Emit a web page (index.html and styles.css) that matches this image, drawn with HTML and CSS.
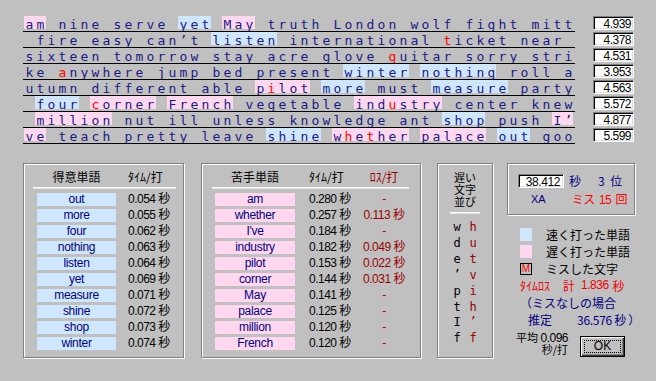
FILE: index.html
```html
<!DOCTYPE html>
<html lang="ja">
<head>
<meta charset="utf-8">
<title>結果</title>
<link rel="stylesheet" href="styles.css">
</head>
<body>
<div class="top">
  <div class="row"><div class="line"><span class="hl p">am</span> nine serve <span class="hl b">yet</span> <span class="hl p">May</span> truth London wolf fight mitt</div><div class="num">4.939</div></div>
  <div class="row"><div class="line"> fire easy can’t <span class="hl b">listen</span> international <span class="m">t</span>icket near </div><div class="num">4.378</div></div>
  <div class="row"><div class="line">sixteen tomorrow stay acre glove <span class="m">g</span>uitar sorry stri</div><div class="num">4.531</div></div>
  <div class="row"><div class="line">ke <span class="m">a</span>nywhere jump bed present <span class="hl b">winter</span> <span class="hl b">nothing</span> roll a</div><div class="num">3.953</div></div>
  <div class="row"><div class="line">utumn different able <span class="hl p">p<span class="m">i</span>lot</span> <span class="hl b">more</span> must <span class="hl b">measure</span> party</div><div class="num">4.563</div></div>
  <div class="row"><div class="line"> <span class="hl b">four</span> <span class="hl p"><span class="m">c</span>orner</span> <span class="hl p">French</span> vegetable <span class="hl p">ind<span class="m">u</span>stry</span> center knew</div><div class="num">5.572</div></div>
  <div class="row"><div class="line"> <span class="hl p">million</span> nut ill unless knowledge ant <span class="hl b">shop</span> push <span class="hl p">I’</span></div><div class="num">4.877</div></div>
  <div class="row"><div class="line"><span class="hl p">ve</span> teach pretty leave <span class="hl b">shine</span> <span class="hl p">w<span class="m">h</span>e<span class="m">t</span>her</span> <span class="hl p">palace</span> <span class="hl b">out</span> goo</div><div class="num">5.599</div></div>
</div>

<div class="bottom">
  <div class="panel good">
    <div class="head"><span class="w">得意単語</span><span class="t">ﾀｲﾑ/打</span></div>
    <div class="sep"></div>
    <div class="list">
      <div class="item"><span class="w">out</span><span class="t">0.054 秒</span></div>
      <div class="item"><span class="w">more</span><span class="t">0.055 秒</span></div>
      <div class="item"><span class="w">four</span><span class="t">0.062 秒</span></div>
      <div class="item"><span class="w">nothing</span><span class="t">0.063 秒</span></div>
      <div class="item"><span class="w">listen</span><span class="t">0.064 秒</span></div>
      <div class="item"><span class="w">yet</span><span class="t">0.069 秒</span></div>
      <div class="item"><span class="w">measure</span><span class="t">0.071 秒</span></div>
      <div class="item"><span class="w">shine</span><span class="t">0.072 秒</span></div>
      <div class="item"><span class="w">shop</span><span class="t">0.073 秒</span></div>
      <div class="item"><span class="w">winter</span><span class="t">0.074 秒</span></div>
    </div>
  </div>

  <div class="panel bad">
    <div class="head"><span class="w">苦手単語</span><span class="t">ﾀｲﾑ/打</span><span class="l">ﾛｽ/打</span></div>
    <div class="sep"></div>
    <div class="list">
      <div class="item"><span class="w">am</span><span class="t">0.280 秒</span><span class="l">-</span></div>
      <div class="item"><span class="w">whether</span><span class="t">0.257 秒</span><span class="l">0.113 秒</span></div>
      <div class="item"><span class="w">I've</span><span class="t">0.184 秒</span><span class="l">-</span></div>
      <div class="item"><span class="w">industry</span><span class="t">0.182 秒</span><span class="l">0.049 秒</span></div>
      <div class="item"><span class="w">pilot</span><span class="t">0.153 秒</span><span class="l">0.022 秒</span></div>
      <div class="item"><span class="w">corner</span><span class="t">0.144 秒</span><span class="l">0.031 秒</span></div>
      <div class="item"><span class="w">May</span><span class="t">0.141 秒</span><span class="l">-</span></div>
      <div class="item"><span class="w">palace</span><span class="t">0.125 秒</span><span class="l">-</span></div>
      <div class="item"><span class="w">million</span><span class="t">0.120 秒</span><span class="l">-</span></div>
      <div class="item"><span class="w">French</span><span class="t">0.120 秒</span><span class="l">-</span></div>
    </div>
  </div>

  <div class="panel slow">
    <div class="shead"><div>遅い</div><div>文字</div><div>並び</div></div>
    <div class="sep"></div>
    <div class="chars">
      <span>w</span><span class="r">h</span>
      <span>d</span><span class="r">u</span>
      <span>e</span><span class="r">t</span>
      <span>’</span><span class="r">v</span>
      <span>p</span><span class="r">i</span>
      <span>t</span><span class="r">h</span>
      <span>I</span><span class="r">’</span>
      <span>f</span><span class="r">f</span>
    </div>
  </div>

  <div class="rc">
    <div class="panel timebox">
      <div class="tr1"><div class="edit">38.412</div><span class="sec">秒</span><span class="rank">3 位</span></div>
      <div class="tr2"><span class="xa">XA</span><span class="miss">ミス <span class="cnt">15</span> 回</span></div>
    </div>
    <div class="legend">
      <div class="lrow"><span class="sq b"></span><span class="ltxt">速く打った単語</span></div>
      <div class="lrow"><span class="sq p"></span><span class="ltxt">遅く打った単語</span></div>
      <div class="lrow"><span class="mbox">M</span><span class="ltxt">ミスした文字</span></div>
      <div class="lrow red"><span>ﾀｲﾑﾛｽ</span><span class="kei">計</span><span class="loss">1.836</span><span class="byo">秒</span></div>
      <div class="lrow navy">（ミスなしの場合</div>
      <div class="lrow navy"><span class="suitei">推定</span><span class="est">36.576 秒 ）</span></div>
    </div>
    <div class="foot">
      <div class="avg"><div class="a1">平均 <span class="d">0.096</span></div><div class="a2">秒/打</div></div>
      <div class="ok"><div class="focus">OK</div></div>
    </div>
  </div>
</div>
</body>
</html>
```

FILE: styles.css
```css
html, body {
  margin: 0;
  padding: 0;
}
body {
  width: 656px;
  height: 381px;
  overflow: hidden;
  background: #c0c0c0;
  font-family: "Noto Sans CJK JP", sans-serif;
  color: #000;
}

/* ---------- typed text rows ---------- */
.top {
  padding: 16px 0 0 23px;
}
.row {
  display: flex;
  height: 16px;
}
.line {
  box-sizing: border-box;
  width: 552px;
  height: 16px;
  padding: 2px 0 0 2.6px;
  border-bottom: 1px solid #000;
  font-family: "DejaVu Sans Mono", monospace;
  font-size: 13px;
  line-height: 13px;
  letter-spacing: 3.17px;
  white-space: pre;
  color: #1a1a88;
  overflow: hidden;
}
.hl {
  display: inline-block;
  vertical-align: top;
  margin: -2px 0 0 -1.6px;
  padding: 2px 0 0 1.6px;
  height: 11px;
  line-height: 13px;
}
.hl.b {
  background: linear-gradient(90deg, #cfe6ff calc(100% - 1.6px), transparent 0);
}
.hl.p {
  background: linear-gradient(90deg, #ffd8f0 calc(100% - 1.6px), transparent 0);
}
.m {
  color: #ff0000;
}
.num {
  box-sizing: border-box;
  margin-left: 18px;
  width: 41px;
  height: 14px;
  padding: 1px 2px 0 0;
  border: 1px solid;
  border-color: #808080 #fff #fff #808080;
  box-shadow: inset 1px 1px 0 #000, inset -1px -1px 0 #dfdfdf;
  background: #fff;
  font-family: "Liberation Sans", sans-serif;
  font-size: 12px;
  line-height: 12px;
  letter-spacing: -0.5px;
  text-align: right;
}

/* ---------- bottom panels ---------- */
.bottom {
  display: flex;
  align-items: flex-start;
  margin-top: 19px;
  padding-left: 23px;
}
.panel {
  box-sizing: border-box;
  border: 1px solid #808080;
  box-shadow: inset 1px 1px 0 #fff, 1px 1px 0 #fff;
  height: 195px;
}
.good { width: 161px; }
.bad { width: 220px; margin-left: 17px; }
.slow { width: 56px; margin-left: 16px; }

.head, .item {
  display: flex;
  padding-left: 13px;
}
.head {
  margin-top: 6px;
  height: 14px;
  font-size: 12px;
  line-height: 14px;
}
.head .w { text-align: center; }
.sep {
  height: 1px;
  border-bottom: 1px solid #e4e4e4;
  background: #fff;
  margin-top: 3px;
}
.good .sep { margin-left: 9px; margin-right: 7px; }
.bad .sep { margin-left: 10px; margin-right: 11px; }

.list {
  margin-top: 4px;
}
.item {
  height: 13px;
  margin-bottom: 3px;
  line-height: 13px;
  font-size: 12px;
  font-family: "Liberation Sans", "Noto Sans CJK JP", sans-serif;
}
.item .w {
  text-align: center;
  color: #000080;
  letter-spacing: -0.3px;
}
.good .w { width: 79px; }
.good .t { margin-left: 12px; }
.good .item .w { background: #cfe6ff; }
.bad .w { width: 80px; }
.bad .t { margin-left: 14px; width: 50px; }
.bad .item .w { background: #ffd8f0; }
.item .t, .item .l {
  letter-spacing: -0.5px;
  white-space: nowrap;
}
.l {
  width: 50px;
  text-align: center;
  color: #990000;
  white-space: nowrap;
}

/* slow letters */
.shead {
  margin-top: 7px;
  font-size: 11px;
  line-height: 12px;
  text-align: center;
}
.shead div {
  height: 12px;
}
.slow .sep {
  width: 30px;
  margin: 5px auto 0;
}
.chars {
  display: grid;
  grid-template-columns: 12px 12px;
  column-gap: 4px;
  justify-content: center;
  margin-top: 6px;
  font-family: "DejaVu Sans Mono", monospace;
  font-size: 12px;
  line-height: 15.9px;
  text-align: center;
}
.chars .r { color: #990000; }

/* right column */
.rc {
  margin-left: 14px;
  width: 129px;
  display: flex;
  flex-direction: column;
}
.timebox {
  width: 128px;
  height: 52px;
  color: #000080;
  font-size: 12px;
}
.tr1 {
  display: flex;
  align-items: center;
  height: 14px;
  margin-top: 10px;
  line-height: 14px;
}
.edit {
  box-sizing: border-box;
  width: 46px;
  height: 14px;
  margin-left: 10px;
  padding: 1px 3px 0 0;
  border: 1px solid;
  border-color: #808080 #fff #fff #808080;
  box-shadow: inset 1px 1px 0 #000, inset -1px -1px 0 #dfdfdf;
  background: #fff;
  color: #000;
  font-family: "Liberation Sans", sans-serif;
  font-size: 12px;
  line-height: 12px;
  letter-spacing: -0.4px;
  text-align: right;
}
.sec { margin-left: 5px; }
.rank { margin-left: 17px; word-spacing: 3px; }
.tr2 {
  display: flex;
  align-items: center;
  height: 14px;
  margin-top: 4px;
  line-height: 14px;
}
.xa {
  margin-left: 23px;
  font-family: "Liberation Sans", sans-serif;
  font-size: 11px;
}
.miss {
  margin-left: 26px;
  color: #ff0000;
  letter-spacing: -0.5px;
  word-spacing: 2px;
  white-space: nowrap;
}
.miss .cnt {
  font-family: "Liberation Sans", sans-serif;
}

.legend {
  margin-top: 11px;
  padding-left: 13px;
  font-size: 12px;
}
.lrow {
  display: flex;
  align-items: center;
  height: 17px;
  line-height: 17px;
  white-space: nowrap;
}
.sq {
  width: 12px;
  height: 13px;
}
.sq.b { background: #cfe6ff; }
.sq.p { background: #ffd8f0; }
.mbox {
  box-sizing: border-box;
  width: 12px;
  height: 12px;
  border: 1px solid #000;
  color: #ff0000;
  font-family: "Liberation Sans", sans-serif;
  font-size: 10px;
  line-height: 10px;
  text-align: center;
}
.ltxt { margin-left: 14px; }
.red {
  color: #f00000;
}
.kei { margin-left: 13px; }
.loss {
  margin-left: 6px;
  font-family: "Liberation Sans", sans-serif;
  letter-spacing: -0.5px;
}
.byo { margin-left: 4px; }
.navy { color: #000080; }
.suitei { margin-left: 8px; }
.est {
  margin-left: 25px;
  letter-spacing: -0.3px;
}

.foot {
  display: flex;
  align-items: flex-start;
  margin-top: 3px;
  padding-left: 5px;
}
.avg {
  width: 56px;
  font-size: 11px;
  text-align: right;
}
.avg .a1, .avg .a2 {
  height: 12px;
  line-height: 12px;
  white-space: nowrap;
}
.avg .d {
  font-family: "Liberation Sans", sans-serif;
  font-size: 12px;
  letter-spacing: -0.5px;
}
.ok {
  box-sizing: border-box;
  width: 45px;
  height: 21px;
  margin: 5px 0 0 12px;
  padding: 3px;
  border: 1px solid #000;
  box-shadow: inset 1px 1px 0 #fff, inset -1px -1px 0 #404040, inset -2px -2px 0 #808080;
  display: flex;
}
.focus {
  flex: 1;
  border: 1px dotted #000;
  font-family: "Liberation Sans", sans-serif;
  font-size: 12px;
  line-height: 11px;
  text-align: center;
}
```
